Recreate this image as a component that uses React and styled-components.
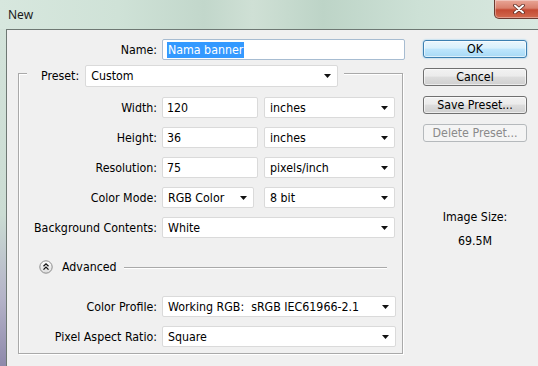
import React from "react";
import styled, { createGlobalStyle } from "styled-components";

const GlobalStyle = createGlobalStyle`
  html, body {
    margin: 0;
    padding: 0;
  }
  body {
    width: 538px;
    height: 366px;
    overflow: hidden;
    font-family: "DejaVu Sans Condensed", "DejaVu Sans", sans-serif;
    font-size: 12.3px;
    color: #000;
  }
`;

const Window = styled.div`
  width: 538px;
  height: 366px;
  display: flex;
  flex-direction: column;
  overflow: hidden;
  background: #d3e3da;
`;

const TitleBar = styled.div`
  height: 29px;
  flex: none;
  display: flex;
  justify-content: space-between;
  align-items: flex-start;
  background: linear-gradient(
    90deg,
    #d7e7de 0%,
    #cfe2d7 22%,
    #c2d7cb 38%,
    #cfe0d5 47%,
    #bdd4c7 60%,
    #cde1d6 78%,
    #d9e8e0 100%
  );
`;

const Title = styled.span`
  padding: 6px 0 0 8px;
  font-family: "Noto Sans", "Open Sans", sans-serif;
  font-size: 12px;
  color: #1a1a1a;
`;

const CloseButton = styled.div`
  width: 47px;
  height: 18px;
  margin-right: -5px;
  display: flex;
  align-items: center;
  justify-content: center;
  border: 1px solid #6b3a30;
  border-top: none;
  border-radius: 0 0 5px 5px;
  background: linear-gradient(180deg, #e9a697 0%, #d9806c 45%, #c44a32 55%, #d26a4f 100%);
  box-shadow: inset 0 0 0 1px rgba(255, 255, 255, 0.35);
`;

const Body = styled.div`
  flex: 1;
  display: flex;
`;

const SideFrame = styled.div`
  width: 6px;
  flex: none;
  background: linear-gradient(180deg, #d3e3da 0%, #cbdcd3 55%, #b4b3c8 80%, #8e89ab 100%);
`;

const Client = styled.div`
  flex: 1;
  display: flex;
  align-items: flex-start;
  padding-top: 9px;
  background: #f0f0f0;
  border-top: 1px solid #6e7873;
  border-left: 1px solid #6e7873;
`;

const FormColumn = styled.div`
  width: 398px;
  display: flex;
  flex-direction: column;
`;

const Row = styled.div`
  display: grid;
  grid-template-columns: ${(p) => p.$labelWidth}px auto;
  column-gap: 5px;
  align-items: center;
  height: 21px;
  margin-top: ${(p) => p.$top || 0}px;
`;

const Label = styled.span`
  text-align: right;
  white-space: nowrap;
`;

const Controls = styled.div`
  display: flex;
  gap: ${(p) => p.$gap || 6}px;
  height: 100%;
`;

const TextBox = styled.div`
  box-sizing: border-box;
  width: ${(p) => p.$width}px;
  height: 100%;
  display: flex;
  align-items: center;
  padding-left: 4px;
  background: #fff;
  border: 1px solid ${(p) => (p.$focused ? "#a7bcd1" : "#dadada")};
  border-radius: 2px;
  white-space: nowrap;
`;

const Selected = styled.span`
  background: #3399ff;
  color: #fff;
  padding: 1px 1px;
`;

const SelectBox = styled(TextBox)`
  justify-content: space-between;
  padding-right: 6px;
  padding-left: 5px;
`;

const GroupBox = styled.div`
  margin: 13px 0 0 11px;
  width: 383px;
  padding-bottom: 6px;
  border: 1px solid #a9a9a9;
  box-shadow: inset 1px 1px 0 #fff, 1px 1px 0 #fff;
  display: flex;
  flex-direction: column;
`;

const GroupHeader = styled.div`
  align-self: flex-start;
  display: flex;
  align-items: center;
  gap: 6px;
  height: 22px;
  margin: -9px 0 0 8px;
  padding: 0 6px 0 14px;
  background: #f0f0f0;
`;

const AdvancedRow = styled.div`
  display: flex;
  align-items: center;
  height: 14px;
  margin-top: 22px;
  padding-left: 20px;
`;

const AdvancedText = styled.span`
  margin-left: 9px;
`;

const Separator = styled.div`
  flex: 1;
  height: 1px;
  margin: 0 15px 0 7px;
  background: #a9a9a9;
  box-shadow: 0 1px 0 #fff;
`;

const ButtonColumn = styled.div`
  width: 104px;
  margin-left: 18px;
  padding-top: 1px;
  display: flex;
  flex-direction: column;
  gap: 10px;
`;

const Button = styled.div`
  box-sizing: border-box;
  height: 18px;
  display: flex;
  align-items: center;
  justify-content: center;
  border-radius: 3px;
  border: 1px solid ${(p) => (p.$primary ? "#3c7fb1" : p.$disabled ? "#b5b9bc" : "#707070")};
  color: ${(p) => (p.$disabled ? "#8a8a8a" : "#000")};
  background: ${(p) =>
    p.$primary
      ? "linear-gradient(180deg, #eaf6fd 0%, #d9f0fc 45%, #bee6fd 50%, #a7d9f5 100%)"
      : p.$disabled
      ? "#f4f4f4"
      : "linear-gradient(180deg, #f2f2f2 0%, #ebebeb 45%, #dddddd 50%, #cfcfcf 100%)"};
  box-shadow: ${(p) =>
    p.$primary
      ? "inset 0 0 0 1px rgba(255,255,255,0.6), 0 0 2px #6fc0f0"
      : p.$disabled
      ? "none"
      : "inset 0 0 0 1px rgba(255,255,255,0.6)"};
`;

const InfoBlock = styled.div`
  margin-top: 58px;
  display: flex;
  flex-direction: column;
  align-items: center;
  gap: 10px;
  line-height: 14px;
`;

const Arrow = () => (
  <svg width="7" height="4" viewBox="0 0 7 4">
    <polygon points="0,0 7,0 3.5,4" fill="#111" />
  </svg>
);

const Select = ({ width, children }) => (
  <SelectBox $width={width}>
    <span>{children}</span>
    <Arrow />
  </SelectBox>
);

const CollapseIcon = () => (
  <svg width="14" height="14" viewBox="0 0 14 14">
    <defs>
      <linearGradient id="cg" x1="0" y1="0" x2="0" y2="1">
        <stop offset="0" stopColor="#ffffff" />
        <stop offset="1" stopColor="#dcdcdc" />
      </linearGradient>
    </defs>
    <circle cx="7" cy="7" r="6.2" fill="url(#cg)" stroke="#8c8c8c" strokeWidth="1" />
    <path d="M4.5 6.3 L7 3.8 L9.5 6.3" fill="none" stroke="#111" strokeWidth="1.3" />
    <path d="M4.5 9.6 L7 7.1 L9.5 9.6" fill="none" stroke="#111" strokeWidth="1.3" />
  </svg>
);

const CloseGlyph = () => (
  <svg width="12" height="10" viewBox="0 0 12 10">
    <path d="M2 1.5 L10 8.5 M10 1.5 L2 8.5" stroke="#5a2a22" strokeWidth="3.6" strokeLinecap="round" />
    <path d="M2 1.5 L10 8.5 M10 1.5 L2 8.5" stroke="#fff" strokeWidth="2" strokeLinecap="round" />
  </svg>
);

const GROUP_LABEL = 138;

export default function App() {
  return (
    <>
      <GlobalStyle />
      <Window>
        <TitleBar>
          <Title>New</Title>
          <CloseButton>
            <CloseGlyph />
          </CloseButton>
        </TitleBar>
        <Body>
          <SideFrame />
          <Client>
            <FormColumn>
              <Row $labelWidth={150}>
                <Label>Name:</Label>
                <Controls>
                  <TextBox $width={243} $focused>
                    <Selected>Nama banner</Selected>
                  </TextBox>
                </Controls>
              </Row>

              <GroupBox>
                <GroupHeader>
                  <Label>Preset:</Label>
                  <Select width={253}>Custom</Select>
                </GroupHeader>

                <Row $labelWidth={GROUP_LABEL} $top={10}>
                  <Label>Width:</Label>
                  <Controls>
                    <TextBox $width={96}>120</TextBox>
                    <Select width={131}>inches</Select>
                  </Controls>
                </Row>
                <Row $labelWidth={GROUP_LABEL} $top={9}>
                  <Label>Height:</Label>
                  <Controls>
                    <TextBox $width={96}>36</TextBox>
                    <Select width={131}>inches</Select>
                  </Controls>
                </Row>
                <Row $labelWidth={GROUP_LABEL} $top={9}>
                  <Label>Resolution:</Label>
                  <Controls>
                    <TextBox $width={96}>75</TextBox>
                    <Select width={131}>pixels/inch</Select>
                  </Controls>
                </Row>
                <Row $labelWidth={GROUP_LABEL} $top={9}>
                  <Label>Color Mode:</Label>
                  <Controls $gap={10}>
                    <Select width={92}>RGB Color</Select>
                    <Select width={131}>8 bit</Select>
                  </Controls>
                </Row>
                <Row $labelWidth={GROUP_LABEL} $top={9}>
                  <Label>Background Contents:</Label>
                  <Controls>
                    <Select width={233}>White</Select>
                  </Controls>
                </Row>

                <AdvancedRow>
                  <CollapseIcon />
                  <AdvancedText>Advanced</AdvancedText>
                  <Separator />
                </AdvancedRow>

                <Row $labelWidth={GROUP_LABEL} $top={22}>
                  <Label>Color Profile:</Label>
                  <Controls>
                    <Select width={234}>Working RGB:&nbsp; sRGB IEC61966-2.1</Select>
                  </Controls>
                </Row>
                <Row $labelWidth={GROUP_LABEL} $top={9}>
                  <Label>Pixel Aspect Ratio:</Label>
                  <Controls>
                    <Select width={234}>Square</Select>
                  </Controls>
                </Row>
              </GroupBox>
            </FormColumn>

            <ButtonColumn>
              <Button $primary>OK</Button>
              <Button>Cancel</Button>
              <Button>Save Preset...</Button>
              <Button $disabled>Delete Preset...</Button>
              <InfoBlock>
                <span>Image Size:</span>
                <span>69.5M</span>
              </InfoBlock>
            </ButtonColumn>
          </Client>
        </Body>
      </Window>
    </>
  );
}
